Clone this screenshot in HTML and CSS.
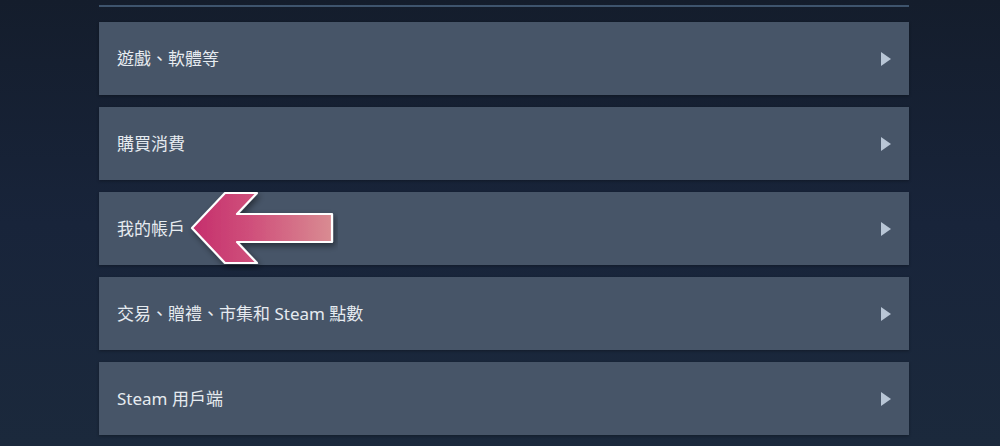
FILE: index.html
```html
<!DOCTYPE html>
<html lang="zh-Hant">
<head>
  <meta charset="UTF-8" />
  <title>Steam 客服</title>
  <link rel="stylesheet" href="styles.css">
</head>
<body>
  <div class="page">
    <div class="help-list">
      <a class="help-row" href="#"><span>遊戲、軟體等</span><i class="arrow-right"></i></a>
      <a class="help-row" href="#"><span>購買消費</span><i class="arrow-right"></i></a>
      <a class="help-row" href="#"><span>我的帳戶</span><i class="arrow-right"></i></a>
      <a class="help-row" href="#"><span>交易、贈禮、市集和 Steam 點數</span><i class="arrow-right"></i></a>
      <a class="help-row" href="#"><span>Steam 用戶端</span><i class="arrow-right"></i></a>
    </div>

    <!-- annotation arrow -->
    <svg class="pointer" width="150" height="80" viewBox="0 0 150 80">
      <defs>
        <linearGradient id="pinkGrad" x1="0" y1="0" x2="1" y2="0">
          <stop offset="0" stop-color="#c52e6c"/>
          <stop offset="0.45" stop-color="#d0527c"/>
          <stop offset="1" stop-color="#d98c92"/>
        </linearGradient>
        <filter id="shadow" x="-20%" y="-20%" width="140%" height="150%">
          <feDropShadow dx="2" dy="3" stdDeviation="3" flood-color="#000" flood-opacity="0.45"/>
        </filter>
      </defs>
      <polygon points="4,37 37,2 69,2 49,23 144,23 144,51 49,51 69,72 37,72"
               fill="url(#pinkGrad)" stroke="#fff" stroke-width="2.2" stroke-linejoin="round" filter="url(#shadow)"/>
    </svg>
  </div>
</body>
</html>
```

FILE: styles.css
```css
* { box-sizing: border-box; }
body {
  margin: 0;
  padding: 0;
  height: 446px;
  overflow: hidden;
  font-family: "Noto Sans", "Noto Sans CJK TC", sans-serif;
  background: linear-gradient(180deg, #141d2c 0%, #18243a 50%, #1b293c 100%);
  color: #e4e9ef;
}
.page {
  position: relative;
  width: 810px;
  margin-left: 99px;
  padding-top: 5px;
}
.help-list {
  display: flex;
  flex-direction: column;
  gap: 12px;
  border-top: 2px solid #3e546d;
  padding-top: 15px;
}
.help-row {
  display: flex;
  align-items: center;
  justify-content: space-between;
  height: 73px;
  padding: 0 18px 0 18px;
  background: #475568;
  color: #e6ebf0;
  text-decoration: none;
  font-size: 17px;
  box-shadow: 0 1px 3px rgba(0, 0, 0, 0.3);
}
.help-row span {
  margin-top: -2px;
}
.arrow-right {
  width: 0;
  height: 0;
  border-top: 7px solid transparent;
  border-bottom: 7px solid transparent;
  border-left: 10px solid #b9c6d6;
}
.pointer {
  position: absolute;
  left: 89px;
  top: 191px;
}
```
